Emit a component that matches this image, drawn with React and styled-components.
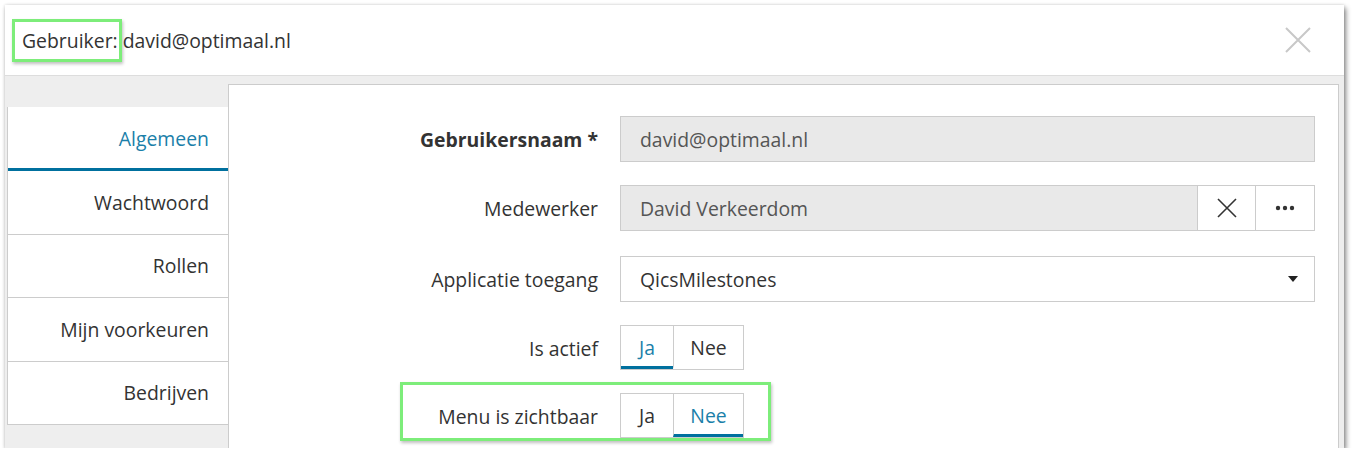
import React from "react";
import styled, { createGlobalStyle } from "styled-components";

const GlobalStyle = createGlobalStyle`
  html, body {
    margin: 0;
    padding: 0;
    background: #ffffff;
  }
  body {
    font-family: "Open Sans", "Liberation Sans", sans-serif;
    color: #333;
  }
`;

const FS = "19.4px";

const tabs = ["Algemeen", "Wachtwoord", "Rollen", "Mijn voorkeuren", "Bedrijven"];

export default function App() {
  return (
    <>
      <GlobalStyle />
      <Dialog>
        <Header>
          <Title>
            <Mark>Gebruiker:</Mark> david@optimaal.nl
          </Title>
          <Close aria-label="Sluiten">
            <svg width="26" height="26" viewBox="0 0 26 26">
              <path d="M1 1 L25 25 M25 1 L1 25" stroke="#c8c8c8" strokeWidth="2" fill="none" />
            </svg>
          </Close>
        </Header>
        <Body>
          <TabList>
            {tabs.map((t, i) => (
              <Tab key={t} $active={i === 0}>{t}</Tab>
            ))}
          </TabList>
          <Panel>
            <Row>
              <Label $bold>Gebruikersnaam *</Label>
              <Input $readonly>david@optimaal.nl</Input>
            </Row>
            <Row>
              <Label>Medewerker</Label>
              <InputGroup>
                <Input $readonly $grouped>David Verkeerdom</Input>
                <AddonButton>
                  <svg width="20" height="20" viewBox="0 0 20 20">
                    <path d="M1 1 L19 19 M19 1 L1 19" stroke="#333" strokeWidth="1.6" fill="none" />
                  </svg>
                </AddonButton>
                <AddonButton $last>
                  <svg width="20" height="6" viewBox="0 0 20 6">
                    <circle cx="3" cy="3" r="2.2" fill="#333" />
                    <circle cx="10" cy="3" r="2.2" fill="#333" />
                    <circle cx="17" cy="3" r="2.2" fill="#333" />
                  </svg>
                </AddonButton>
              </InputGroup>
            </Row>
            <Row $mt={25}>
              <Label>Applicatie toegang</Label>
              <Select>
                <span>QicsMilestones</span>
                <Caret />
              </Select>
            </Row>
            <Row>
              <Label>Is actief</Label>
              <Toggle>
                <ToggleOption $active $w={52}>Ja</ToggleOption>
                <ToggleOption $w={70}>Nee</ToggleOption>
              </Toggle>
            </Row>
            <Row $mt={22}>
              <Label>Menu is zichtbaar</Label>
              <Toggle>
                <ToggleOption $w={52}>Ja</ToggleOption>
                <ToggleOption $active $w={70}>Nee</ToggleOption>
              </Toggle>
              <RowMark />
            </Row>
          </Panel>
        </Body>
      </Dialog>
    </>
  );
}

const Dialog = styled.div`
  margin: 5px 0 0 5px;
  width: 1339px;
  height: 443px;
  background: #fff;
  display: flex;
  flex-direction: column;
  overflow: hidden;
  box-shadow: 2px 3px 5px rgba(0, 0, 0, 0.45), 0 0 3px rgba(0, 0, 0, 0.15);
`;

const Header = styled.div`
  height: 71px;
  flex: none;
  box-sizing: border-box;
  border-bottom: 1px solid #dddddd;
  display: flex;
  align-items: center;
  justify-content: space-between;
  padding: 0 33px 0 7px;
`;

const Title = styled.div`
  font-size: ${FS};
  color: #333;
  white-space: pre;
`;

const Mark = styled.span`
  display: inline-block;
  line-height: 37px;
  padding: 0 1px 0 7px;
  margin-right: -4px;
  border: 3px solid #7ded7a;
  box-shadow: 1px 2px 3px rgba(0, 0, 0, 0.25);
`;

const Close = styled.div`
  width: 26px;
  height: 26px;
  display: flex;
`;

const Body = styled.div`
  flex: 1;
  display: flex;
  align-items: flex-start;
  background: #eeeeee;
  padding: 8px 5px 0 2px;
  min-height: 0;
`;

const TabList = styled.div`
  width: 220px;
  flex: none;
  margin-top: 23px;
  background: #fff;
  border-left: 1px solid #cccccc;
`;

const Tab = styled.div`
  height: ${(p) => (p.$active ? "61px" : "62.5px")};
  box-sizing: content-box;
  display: flex;
  align-items: center;
  justify-content: flex-end;
  padding: 2px 19px 0 0;
  margin-top: -2px;
  &:first-child {
    margin-top: 0;
    padding-top: 2px;
    height: 59px;
  }
  font-size: ${FS};
  color: ${(p) => (p.$active ? "#1b7fa9" : "#333")};
  border-bottom: ${(p) => (p.$active ? "3px solid #00709e" : "1px solid #cccccc")};
`;

const Panel = styled.div`
  flex: 1;
  align-self: stretch;
  background: #fff;
  border: 1px solid #cccccc;
  border-bottom: none;
  padding: 31px 23px 0 0;
  display: flex;
  flex-direction: column;
`;

const Row = styled.div`
  position: relative;
  display: grid;
  grid-template-columns: 369px 1fr;
  column-gap: 22px;
  align-items: center;
  height: 46px;
  flex: none;
  margin-top: ${(p) => (p.$mt ?? 23)}px;
  &:first-child {
    margin-top: 0;
  }
`;

const Label = styled.div`
  text-align: right;
  font-size: ${FS};
  font-weight: ${(p) => (p.$bold ? 700 : 400)};
  color: #333;
  white-space: nowrap;
`;

const Input = styled.div`
  height: 46px;
  box-sizing: border-box;
  display: flex;
  align-items: center;
  padding-left: 19px;
  font-size: ${FS};
  color: #555;
  background: ${(p) => (p.$readonly ? "#e9e9e9" : "#fff")};
  border: 1px solid #cccccc;
  flex: ${(p) => (p.$grouped ? 1 : "none")};
`;

const InputGroup = styled.div`
  display: flex;
`;

const AddonButton = styled.div`
  width: ${(p) => (p.$last ? "59px" : "58px")};
  height: 46px;
  box-sizing: border-box;
  display: flex;
  align-items: center;
  justify-content: center;
  background: #fff;
  border: 1px solid #cccccc;
  border-left: none;
`;

const Select = styled.div`
  height: 46px;
  box-sizing: border-box;
  display: flex;
  align-items: center;
  justify-content: space-between;
  padding: 0 16px 0 19px;
  font-size: ${FS};
  color: #333;
  background: #fff;
  border: 1px solid #cccccc;
`;

const Caret = styled.span`
  width: 0;
  height: 0;
  border-left: 5px solid transparent;
  border-right: 5px solid transparent;
  border-top: 6px solid #222;
`;

const Toggle = styled.div`
  display: flex;
  justify-self: start;
  align-self: start;
  border: 1px solid #cccccc;
`;

const ToggleOption = styled.div`
  width: ${(p) => p.$w}px;
  height: 43px;
  box-sizing: border-box;
  display: flex;
  align-items: center;
  justify-content: center;
  font-size: ${FS};
  color: ${(p) => (p.$active ? "#1b7fa9" : "#333")};
  border-bottom: 3px solid ${(p) => (p.$active ? "#00709e" : "transparent")};
  padding-top: 2px;
  & + & {
    border-left: 1px solid #cccccc;
  }
`;

const RowMark = styled.div`
  position: absolute;
  left: 171px;
  top: -11px;
  width: 371px;
  height: 59px;
  box-sizing: border-box;
  border: 3px solid #7ded7a;
  box-shadow: 1px 2px 3px rgba(0, 0, 0, 0.25);
  pointer-events: none;
`;
